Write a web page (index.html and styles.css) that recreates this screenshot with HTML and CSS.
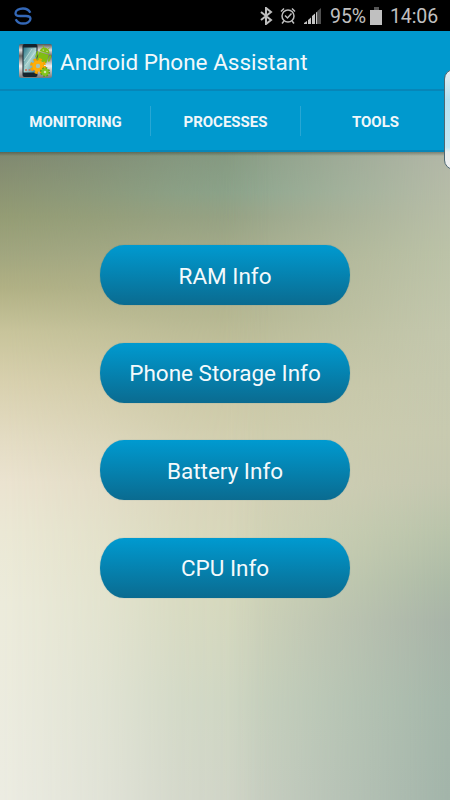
FILE: index.html
```html
<!DOCTYPE html>
<html lang="en">
<head>
<meta charset="utf-8">
<title>Android Phone Assistant</title>
<link rel="stylesheet" href="styles.css">
</head>
<body>
<div class="screen">
  <header class="status">
    <svg class="status-app" width="18" height="18" viewBox="0 0 18 18" fill="none" stroke="#3468b8" stroke-width="2.300"><path d="M16.300 5.800C15 3 12.300 1.500 9 1.500C5 1.500 1.500 3.500 1.500 6.200C1.500 8.500 3.500 9 6 9H12C14.500 9 16.500 9.600 16.500 11.800C16.500 14.500 13 16.500 9 16.500C5.700 16.500 3 15 1.700 12.200"/></svg>
    <div class="status-right">
      <svg class="bt" width="13" height="18" viewBox="0 0 13 18" fill="none" stroke="#bdbdbd" stroke-width="2"><path d="M1 5l10 8-5 4V1l5 4-10 8"/></svg>
      <svg class="alarm" width="16" height="18" viewBox="0 0 16 18" fill="none" stroke="#bdbdbd" stroke-width="1.5"><circle cx="8" cy="9" r="6"/><path d="M5 8.500l2.500 2.500 4-4.500M1 4.500L4 1.500M12 1.500l3 3M4 14l-2 2.500M12 14l2 2.500"/></svg>
      <svg class="signal" width="17" height="17" viewBox="0 0 17 17" fill="#c4c4c4"><path d="M0 17v-1l3-2v3zM4 17v-4l3-2.500V17zM8 17V9L11 6.500V17zM12 17V5.500l1.500-1V17z"/><path fill="#505050" d="M13.500 17V4L17 1v16z"/></svg>
      <span class="percent">95%</span>
      <svg class="battery" width="12" height="18" viewBox="0 0 12 18"><path fill="#c0c0c0" d="M0 3h12v15H0z"/><path fill="#555" d="M4 0h5v3H4z"/></svg>
      <span class="clock">14:06</span>
    </div>
  </header>
  <div class="titlebar">
    <svg class="logo" width="33" height="34" viewBox="0 0 33 34">
      <defs><linearGradient id="metal" x2="0" y2="1"><stop offset="0" stop-color="#555"/><stop offset=".18" stop-color="#ddd"/><stop offset=".35" stop-color="#666"/><stop offset=".65" stop-color="#eee"/><stop offset="1" stop-color="#777"/></linearGradient>
      <linearGradient id="glass" x2="1" y2="1"><stop offset="0" stop-color="#2c7688"/><stop offset=".5" stop-color="#a9d2ce"/><stop offset="1" stop-color="#3b8195"/></linearGradient></defs>
      <rect width="33" height="34" rx="2" fill="url(#metal)"/>
      <rect x="3.500" y="0" width="15" height="33" rx="2" fill="#15232c"/><rect x="4.500" y="3.500" width="13" height="25" fill="url(#glass)"/>
      <path d="M5 17l8-12M6 22L17 7" stroke="#d7eee8" stroke-width="1" opacity=".6"/>
      <path d="M6 26h10" stroke="#d86a50" stroke-width="1.500" stroke-dasharray="2 1.500"/>
      <g fill="#80bd14" stroke="#80bd14" transform="rotate(18 25 10)"><path stroke="none" d="M20 8.500a5 5 0 0 1 10 0zM20 9.300h10V18H20z"/><path d="M18.300 10v5M31.700 10v5M23 17v4M27.500 17v4" stroke-width="1.800" stroke-linecap="round"/><path d="M21.500 2l1.500 3M28.500 2L27 5" stroke-width=".8"/><path fill="#fff" stroke="none" d="M22.500 6h1v1h-1zM26.500 6h1v1h-1z"/></g>
      <circle cx="19" cy="22" r="6" fill="none" stroke="#f7a300" stroke-width="4" stroke-dasharray="2.700 2.010"/><circle cx="19" cy="22" r="4" fill="#a5c4ba" stroke="#ffae08" stroke-width="3.600"/>
      <circle cx="26" cy="28" r="4" fill="none" stroke="#5b9b0d" stroke-width="2" stroke-dasharray="1.700 1.440"/><circle cx="26" cy="28" r="2.500" fill="#d5e6a5" stroke="#83c51c" stroke-width="2.400"/>
    </svg>
    <h1 class="title">Android Phone Assistant</h1>
  </div>
  <nav class="tabs">
    <div class="tab active">MONITORING</div>
    <div class="tab">PROCESSES</div>
    <div class="tab">TOOLS</div>
  </nav>
  <main class="content">
    <div class="tone tone-mid"></div>
    <div class="tone tone-left"></div>
    <button class="pill">RAM Info</button>
    <button class="pill">Phone Storage Info</button>
    <button class="pill">Battery Info</button>
    <button class="pill">CPU Info</button>
  </main>
  <div class="edge"></div>
</div>
</body>
</html>
```
FILE: styles.css
```css
* { box-sizing: border-box; }
body { margin: 0; font-family: Roboto, "Liberation Sans", sans-serif; }
.screen { position: relative; width: 450px; height: 800px; overflow: hidden; display: flex; flex-direction: column; }
.status { height: 31px; background: #000; display: flex; justify-content: space-between; align-items: center; padding: 0 12px 0 14px; color: #c0c0c0; }
.status-right { display: flex; align-items: center; }
.alarm { margin-left: 7px; }
.signal { margin-left: 8px; }
.percent { margin-left: 9px; font-size: 19.5px; letter-spacing: -.1px; line-height: 31px; padding-top: 2px; }
.battery { margin-left: 4px; }
.clock { margin-left: 8px; font-size: 19.5px; letter-spacing: -.1px; line-height: 31px; padding-top: 2px; }
.titlebar { height: 60px; background: #0099ce; border-bottom: 2px solid #0786b8; display: flex; align-items: center; padding: 1px 0 0 19px; }
.title { margin: 2px 0 0 8px; font-size: 22.5px; font-weight: 400; color: #f2f8fb; white-space: nowrap; }
.tabs { height: 61px; background: #0099ce; display: grid; grid-template-columns: repeat(3, 1fr); }
.tab { display: flex; align-items: center; justify-content: center; font-size: 15px; font-weight: 700; color: #f0f7fa; border-bottom: 2px solid #0786b8; background: linear-gradient(#28a7d4, #28a7d4) left 15px / 1px 30px no-repeat; padding: 2px 0 0 1px; }
.tab.active { border-bottom-color: #0099ce; background: none; }
.content { position: relative; flex: 1; display: flex; flex-direction: column; align-items: center; gap: 37.5px; padding-top: 93px;
  background: linear-gradient(#b3b8a8 0, #bcc3a8 100px, #c4c8ae 180px, #c8cab0 280px, #c5c8b0 330px, #b9c4ab 380px, #adbba7 430px, #a8b4a8 470px, #a5b7aa 550px, #a3b5aa 648px); }
.content::after { content: ""; position: absolute; inset: 0 0 auto; height: 4px; background: linear-gradient(rgba(40,50,40,.4), transparent); }
.tone { position: absolute; inset: 0; }
.tone-mid { background: linear-gradient(#869c84 0, #8ba48c 40px, #96a386 65px, #a9ae8d 110px, #b5b792 165px, #cac7a4 235px, #d0ceae 290px, #d5d2b6 340px, #d6d6b8 400px, #d3d6ba 450px, #ccd4c0 550px, #cdd2c4 648px); mask-image: linear-gradient(90deg, #000 50%, rgba(0,0,0,.55) 72%, transparent); }
.tone-left { background: linear-gradient(#7f8870 0, #949c74 65px, #a0a57e 100px, #b0b084 135px, #c8c49b 180px, #d8d0ae 230px, #e4dcc4 290px, #ebe3d0 330px, #ebe8d5 380px, #ecebdb 450px, #ecece2 648px); mask-image: linear-gradient(90deg, #000, rgba(0,0,0,.65) 22%, rgba(0,0,0,.25) 40%, transparent 60%); }
.pill { position: relative; flex: none; width: 250px; height: 60px; border: 0; border-radius: 24px / 30px; padding: 1px 0 0; background: linear-gradient(#009ad0, #0a6b90); color: #f4fafc; font: 22.5px Roboto, "Liberation Sans", sans-serif; box-shadow: 0 0 1px rgba(0,90,130,.5); }
.edge { position: absolute; left: 444px; top: 69px; width: 20px; height: 101px; border: 1px solid #4e6872; border-radius: 10px; background: linear-gradient(#e9eff1, #b4e2f2 30%, #c4e8f4 78%, #eef0f0 83%); }
```
